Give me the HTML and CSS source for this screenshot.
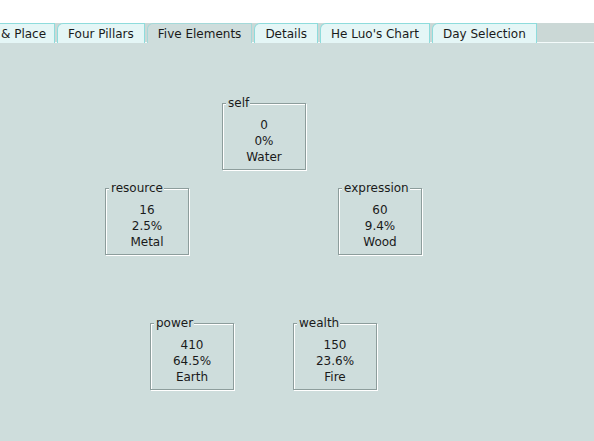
FILE: index.html
```html
<!DOCTYPE html>
<html>
<head>
<meta charset="utf-8">
<link rel="stylesheet" href="styles.css">
</head>
<body>
<div class="top"></div>
<div class="tabs">
  <div class="tab first">&amp; Place</div>
  <div class="tab">Four Pillars</div>
  <div class="tab active">Five Elements</div>
  <div class="tab">Details</div>
  <div class="tab">He Luo's Chart</div>
  <div class="tab">Day Selection</div>
</div>
<div class="panel">
  <div class="node n-self"><span class="title">self</span><div>0</div><div>0%</div><div>Water</div></div>
  <div class="node n-resource"><span class="title">resource</span><div>16</div><div>2.5%</div><div>Metal</div></div>
  <div class="node n-expression"><span class="title">expression</span><div>60</div><div>9.4%</div><div>Wood</div></div>
  <div class="node n-power"><span class="title">power</span><div>410</div><div>64.5%</div><div>Earth</div></div>
  <div class="node n-wealth"><span class="title">wealth</span><div>150</div><div>23.6%</div><div>Fire</div></div>
</div>
</body>
</html>
```
FILE: styles.css
```css
html, body {
  margin: 0;
  padding: 0;
  width: 594px;
  height: 441px;
  overflow: hidden;
  background: #ffffff;
  font-family: "DejaVu Sans", Verdana, sans-serif;
  font-size: 12px;
  color: #1a1a1a;
}
.top {
  height: 23px;
  background: #ffffff;
}
.tabs {
  display: flex;
  gap: 2px;
  height: 19px;
  background: #cbd8d6;
  position: relative;
  z-index: 1;
}
.tab {
  box-sizing: border-box;
  height: 20px;
  padding: 0 10px;
  line-height: 20px;
  background: #e4f6f6;
  border: 1px solid #8edcdc;
  border-bottom: none;
  border-top-left-radius: 6px;
  white-space: nowrap;
}
.tab.first {
  margin-left: -10px;
  padding-left: 10px;
  padding-right: 8px;
  border-top-left-radius: 0;
}
.tab.active {
  background: #cedddc;
  border-color: #a4d9d9;
}
.panel {
  position: relative;
  height: 399px;
  background: #cedddc;
  border-top: 1px solid #f4fbfb;
  box-sizing: border-box;
}
.node {
  position: absolute;
  box-sizing: border-box;
  width: 84px;
  height: 67px;
  padding-top: 13px;
  border: 1px solid #8d9d9c;
  box-shadow: inset 1px 1px 0 #ffffff, 1px 1px 0 #ffffff;
  text-align: center;
  line-height: 16px;
}
.title {
  position: absolute;
  left: 3px;
  top: -9px;
  padding: 0 1px 0 2px;
  line-height: 16px;
  background: #cedddc;
}
.n-self { left: 222px; top: 60px; }
.n-resource { left: 105px; top: 145px; }
.n-expression { left: 338px; top: 145px; }
.n-power { left: 150px; top: 280px; }
.n-wealth { left: 293px; top: 280px; }
```
